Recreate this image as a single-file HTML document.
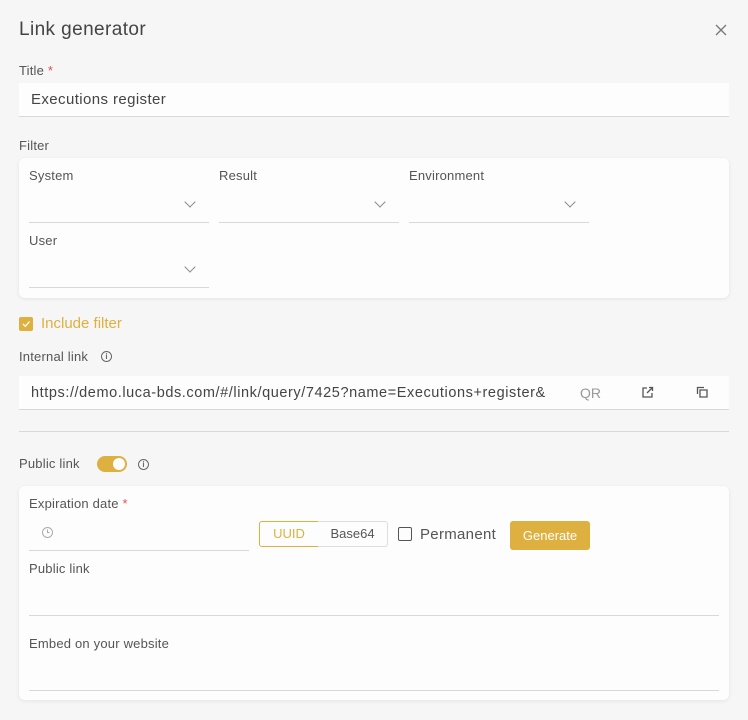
<!DOCTYPE html>
<html><head><style>
*{box-sizing:border-box;margin:0;padding:0}
body{width:748px;height:720px;background:#f6f6f6;font-family:"Liberation Sans",sans-serif;color:#555;position:relative;overflow:hidden}
.a{position:absolute;white-space:nowrap}
.lbl{font-size:13px;color:#555;letter-spacing:0.2px}
.req{color:#e05050}
.card{position:absolute;background:#fdfdfd;border-radius:6px;box-shadow:0 1px 4px rgba(0,0,0,.08)}
.ul{position:absolute;height:1px;background:#d8d8d8}
.chev{position:absolute;width:8px;height:8px;border-right:1.2px solid #888;border-bottom:1.2px solid #888;transform:rotate(45deg)}
.info{position:absolute;width:11px;height:11px;border:1.2px solid #666;border-radius:50%;font-size:8px;text-align:center;line-height:9px;color:#666;font-weight:bold}
</style></head><body>
<div class="a" style="left:19px;top:19px;font-size:19px;color:#444;letter-spacing:0.4px">Link generator</div>
<svg class="a" style="left:715px;top:24px" width="12" height="12"><path d="M1 1L11 11M11 1L1 11" stroke="#777" stroke-width="1.3"/></svg>

<div class="a lbl" style="left:19px;top:63px">Title <span class="req">*</span></div>
<div class="a" style="left:19px;top:83px;width:710px;height:34px;background:#fdfdfd;border-bottom:1px solid #d8d8d8"></div>
<div class="a" style="left:31px;top:91px;font-size:15px;color:#444;letter-spacing:0.4px">Executions register</div>

<div class="a lbl" style="left:19px;top:138px">Filter</div>
<div class="card" style="left:19px;top:158px;width:710px;height:140px"></div>
<div class="a lbl" style="left:29px;top:168px">System</div>
<div class="a lbl" style="left:219px;top:168px">Result</div>
<div class="a lbl" style="left:409px;top:168px">Environment</div>
<div class="ul" style="left:29px;top:222px;width:180px"></div>
<div class="ul" style="left:219px;top:222px;width:180px"></div>
<div class="ul" style="left:409px;top:222px;width:180px"></div>
<div class="chev" style="left:186px;top:198px"></div>
<div class="chev" style="left:376px;top:198px"></div>
<div class="chev" style="left:566px;top:198px"></div>
<div class="a lbl" style="left:29px;top:233px">User</div>
<div class="ul" style="left:29px;top:287px;width:180px"></div>
<div class="chev" style="left:186px;top:263px"></div>

<div class="a" style="left:19px;top:317px;width:14px;height:14px;background:#deb040;border-radius:2px"></div>
<svg class="a" style="left:21px;top:319px" width="10" height="10"><path d="M2 5L4.3 7.3L8.5 2.5" stroke="#fff" stroke-width="1.3" fill="none"/></svg>
<div class="a" style="left:41px;top:315px;font-size:15px;color:#deb040">Include filter</div>

<div class="a lbl" style="left:19px;top:349px">Internal link</div>
<div class="info" style="left:101px;top:351px">i</div>
<div class="a" style="left:19px;top:376px;width:710px;height:34px;background:#fdfdfd;border-bottom:1px solid #d8d8d8"></div>
<div class="a" style="left:31px;top:385px;font-size:14.5px;color:#444;letter-spacing:0.58px">https://demo.luca-bds.com/#/link/query/7425?name=Executions+register&amp;</div>
<div class="a" style="left:580px;top:385px;font-size:14px;color:#999">QR</div>
<svg class="a" style="left:641px;top:386px" width="13" height="13"><path d="M6 2H2V11H11V7M8 1.5H11.5V5M11.5 1.5L6 7" stroke="#555" stroke-width="1.3" fill="none"/></svg>
<svg class="a" style="left:696px;top:386px" width="13" height="13"><path d="M1.5 8V1.5H8M4 4H11V11H4Z" stroke="#555" stroke-width="1.3" fill="none"/></svg>

<div class="ul" style="left:19px;top:431px;width:710px"></div>

<div class="a lbl" style="left:19px;top:456px">Public link</div>
<div class="a" style="left:97px;top:456px;width:30px;height:16px;background:#deb040;border-radius:8px"></div>
<div class="a" style="left:113px;top:458px;width:12px;height:12px;background:#fff;border-radius:50%"></div>
<div class="info" style="left:138px;top:459px">i</div>

<div class="card" style="left:19px;top:486px;width:710px;height:214px"></div>
<div class="a lbl" style="left:29px;top:496px">Expiration date <span class="req">*</span></div>
<div class="ul" style="left:29px;top:550px;width:220px"></div>
<div class="a" style="left:42px;top:527px;width:11px;height:11px;border:1px solid #aaa;border-radius:50%"></div>
<svg class="a" style="left:42px;top:527px" width="11" height="11"><path d="M5.5 2.5V5.5H7.5" stroke="#aaa" fill="none"/></svg>
<div class="a" style="left:259px;top:521px;width:60px;height:26px;border:1px solid #deb040;border-radius:3px 0 0 3px;color:#deb040;font-size:13px;text-align:center;line-height:24px">UUID</div>
<div class="a" style="left:318px;top:521px;width:70px;height:26px;border:1px solid #ddd;border-left:none;border-radius:0 3px 3px 0;color:#555;font-size:13px;text-align:center;line-height:24px;background:#fdfdfd">Base64</div>
<div class="a" style="left:398px;top:527px;width:14px;height:14px;border:1px solid #555;border-radius:2px"></div>
<div class="a" style="left:420px;top:526px;font-size:15px;color:#555;letter-spacing:0.3px">Permanent</div>
<div class="a" style="left:510px;top:521px;width:80px;height:29px;background:#deb040;border-radius:3px;color:#fff;font-size:13px;text-align:center;line-height:29px">Generate</div>
<div class="a lbl" style="left:29px;top:561px">Public link</div>
<div class="ul" style="left:29px;top:615px;width:690px"></div>
<div class="a lbl" style="left:29px;top:636px">Embed on your website</div>
<div class="ul" style="left:29px;top:690px;width:690px"></div>
</body></html>
